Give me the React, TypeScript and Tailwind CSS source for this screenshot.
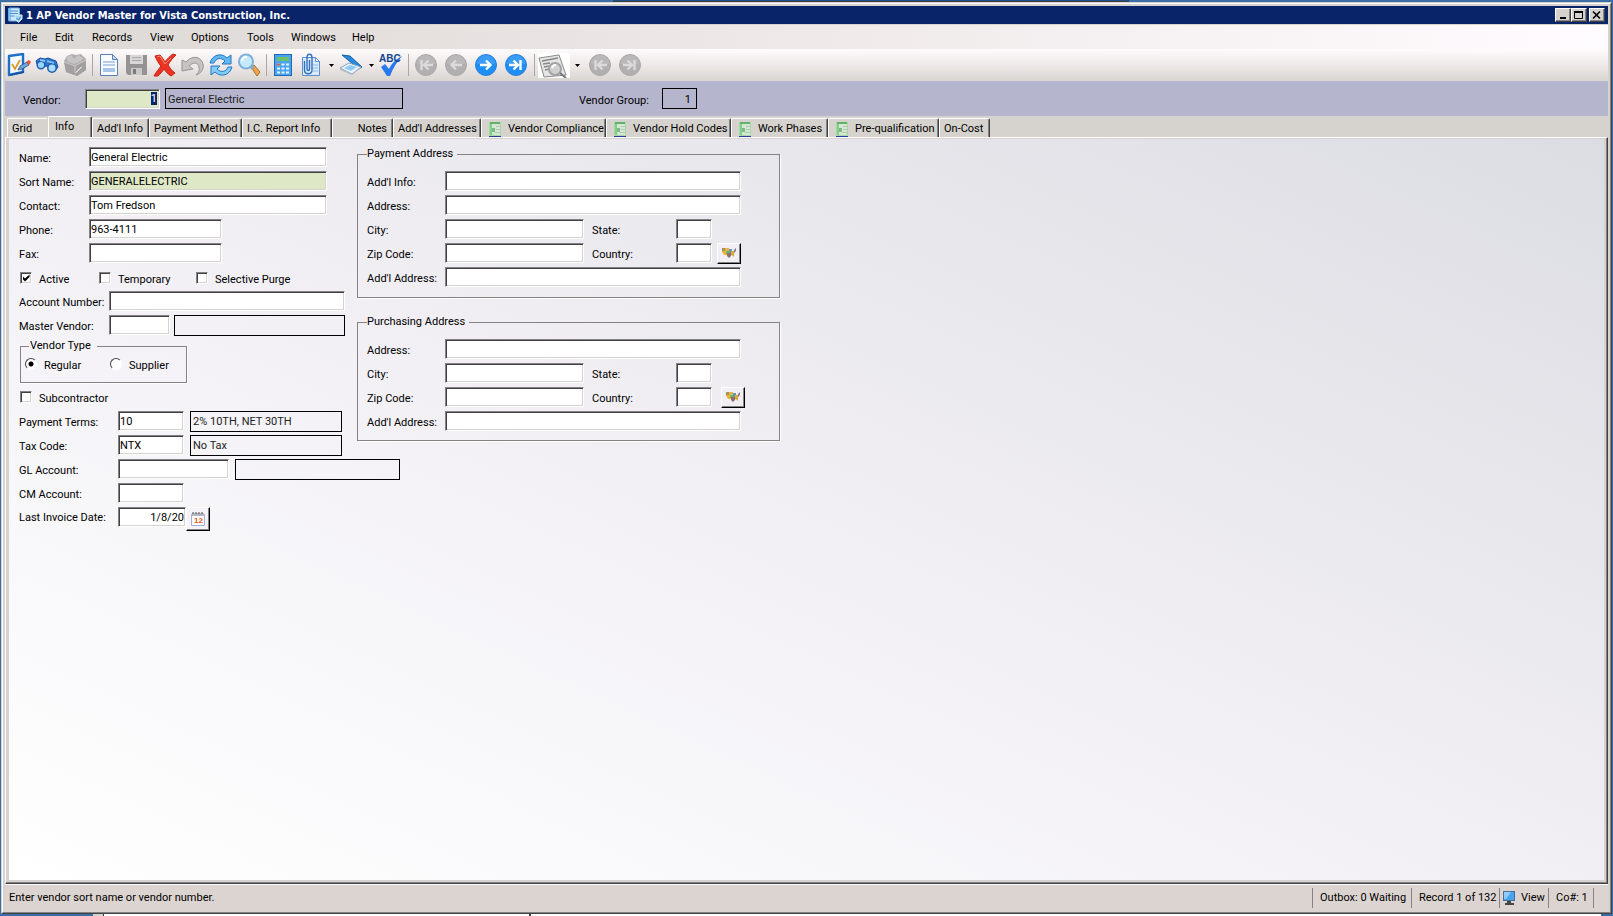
import React, { useEffect, useRef } from 'react';
import clsx from 'clsx';

const sunken =
  'border border-t-[#848284] border-l-[#848284] border-r-white border-b-white shadow-[inset_1px_1px_0_#424142,inset_-1px_-1px_0_#d6d3ce]';
const raised =
  'bg-[#d6d3ce] border border-t-white border-l-white border-r-[#424142] border-b-[#424142] shadow-[inset_-1px_-1px_0_#848284]';

interface FieldProps {
  id: string;
  label: string;
  labelClass: string;
  inputClass: string;
  value?: string;
}

const TextInput: React.FC<{ id: string; className: string; value?: string }> = ({
  id,
  className,
  value = '',
}) => (
  <input
    id={id}
    type="text"
    defaultValue={value}
    className={clsx('h-5 shrink-0 px-px outline-none', sunken, className)}
  />
);

const Label: React.FC<{ htmlFor: string; className?: string; children: React.ReactNode }> = ({
  htmlFor,
  className,
  children,
}) => (
  <label htmlFor={htmlFor} className={clsx('shrink-0 pt-1 whitespace-nowrap', className)}>
    {children}
  </label>
);

const Field: React.FC<FieldProps> = ({ id, label, labelClass, inputClass, value }) => (
  <>
    <Label htmlFor={id} className={labelClass}>
      {label}
    </Label>
    <TextInput id={id} className={inputClass} value={value} />
  </>
);

const Display: React.FC<{ htmlFor: string; className: string; children?: React.ReactNode }> = ({
  htmlFor,
  className,
  children,
}) => (
  <output
    htmlFor={htmlFor}
    className={clsx('flex h-[21px] shrink-0 items-center border border-black px-0.5 pt-0.5 text-[#222]', className)}
  >
    {children}
  </output>
);

const Row: React.FC<{ children: React.ReactNode }> = ({ children }) => (
  <div className="flex h-5 items-center">{children}</div>
);

const CheckBox: React.FC<{ id: string; label: string; className?: string; checked?: boolean }> = ({
  id,
  label,
  className,
  checked,
}) => (
  <label htmlFor={id} className={clsx('flex shrink-0 items-center gap-[7px]', className)}>
    <span className="grid size-3">
      <input
        id={id}
        type="checkbox"
        defaultChecked={checked}
        className={clsx('peer col-start-1 row-start-1 size-3 appearance-none bg-white', sunken)}
      />
      <svg
        viewBox="0 0 12 12"
        className="pointer-events-none invisible col-start-1 row-start-1 size-3 peer-checked:visible"
      >
        <path d="M3 4.5v3L5 9.500l4.500-4.500V2.500L5 6.500z" fill="#000" />
      </svg>
    </span>
    <span className="pt-1">{label}</span>
  </label>
);

const Radio: React.FC<{ id: string; label: string; checked?: boolean; className?: string }> = ({
  id,
  label,
  checked,
  className,
}) => (
  <label htmlFor={id} className={clsx('flex items-center gap-[7px]', className)}>
    <input
      id={id}
      name="vendor-type"
      type="radio"
      defaultChecked={checked}
      className="size-3 appearance-none rounded-full border border-t-[#424142] border-r-white border-b-white border-l-[#424142] bg-white checked:bg-[radial-gradient(circle,#000_2px,#fff_3px)]"
    />
    <span className="pt-1">{label}</span>
  </label>
);

const MapButton: React.FC<{ label: string; className?: string }> = ({ label, className }) => (
  <button
    type="button"
    aria-label={label}
    className={clsx(
      'grid h-[21px] w-6 shrink-0 place-items-center border border-t-white border-r-black border-b-black border-l-white bg-[#f1eff3] shadow-[inset_-1px_-1px_0_#848284]',
      className,
    )}
  >
    <svg width="16" height="12" viewBox="0 0 16 12">
      <path d="M1 1h4v4H1z" fill="#a9905c" />
      <path d="M1 4h5v4H3z" fill="#edb52f" />
      <path d="M4 1h4v4H4z" fill="#e2b84a" />
      <path d="M5 4h3v3H5z" fill="#7fb069" />
      <path d="M6 6h4v3L8 11 6 9z" fill="#8a6f6a" />
      <path d="M8 2h3v4H8z" fill="#5f97b5" />
      <path d="M10 4h4l-1 3v3l-1-1-2-1z" fill="#d9a93c" />
      <path d="M13 3l2-2v3l-2 2z" fill="#8b7a8c" />
    </svg>
  </button>
);

/* ---------- title bar ---------- */

const TitleBar: React.FC = () => (
  <header className="flex h-[18px] items-center bg-[#0a246a] pr-[3px] pl-[3px] text-white">
    <svg width="15" height="16" viewBox="0 0 15 16" className="shrink-0">
      <rect x="0.500" y="1" width="11" height="13" rx="1" fill="#cfe8fa" stroke="#6fb0e0" />
      <path d="M2 4h8M2 6.500h8M2 9h5" stroke="#3f8fd0" />
      <path d="M0 1h3v13H0z" fill="#5aa9e6" opacity="0.6" />
      <path d="M7 8h7v4l-3.500 3.500L7 12z" fill="#a9d3f0" stroke="#d5ebfa" />
      <path d="M8.500 11l2 2 2-3" stroke="#2f7fc0" fill="none" />
    </svg>
    <h1 className="grow pt-px pl-[3px] font-['DejaVu_Sans_Condensed','DejaVu_Sans',sans-serif] text-[11px] leading-[14px] font-bold">
      1 AP Vendor Master for Vista Construction, Inc.
    </h1>
    <button type="button" aria-label="Minimize" className={clsx('grid h-3.5 w-4 place-items-center', raised)}>
      <svg width="12" height="10" viewBox="0 0 12 10">
        <path d="M3 7h6v2H3z" />
      </svg>
    </button>
    <button type="button" aria-label="Maximize" className={clsx('grid h-3.5 w-4 place-items-center', raised)}>
      <svg width="12" height="10" viewBox="0 0 12 10">
        <path d="M1.500 1.500h8v7h-8z" fill="none" stroke="#000" />
        <path d="M1 1h9v2H1z" />
      </svg>
    </button>
    <button type="button" aria-label="Close" className={clsx('ml-0.5 grid h-3.5 w-4 place-items-center', raised)}>
      <svg width="12" height="10" viewBox="0 0 12 10">
        <path d="M2 1.500l7 7M9 1.500l-7 7" stroke="#000" strokeWidth="1.600" />
      </svg>
    </button>
  </header>
);

const menus = [
  { label: 'File', width: 'w-[35px]' },
  { label: 'Edit', width: 'w-[37px]' },
  { label: 'Records', width: 'w-[58px]' },
  { label: 'View', width: 'w-[41px]' },
  { label: 'Options', width: 'w-14' },
  { label: 'Tools', width: 'w-11' },
  { label: 'Windows', width: 'w-[61px]' },
  { label: 'Help', width: 'w-10' },
];

const MenuBar: React.FC = () => (
  <nav className="flex h-[25px] items-center border-t border-[#d6d3ce] bg-linear-to-r from-[#dcd8d4] via-[#efe9e9] to-[#fffcff] pt-0.5 pl-[15px]">
    {menus.map((menu) => (
      <button key={menu.label} type="button" className={clsx('shrink-0 text-left', menu.width)}>
        {menu.label}
      </button>
    ))}
  </nav>
);

/* ---------- toolbar ---------- */

const CheckFormIcon = () => (
  <svg width="24" height="24" viewBox="0 0 24 24">
    <path d="M2 3l14-2v18L2 22z" fill="#f4faff" stroke="#1d6fc8" strokeWidth="2.400" strokeLinejoin="round" />
    <path d="M3 22l14-3" stroke="#174f9c" strokeWidth="1.500" />
    <path d="M5 11l3 5 5-9" fill="none" stroke="#d99a22" strokeWidth="1.800" />
    <path d="M13 13l7-4 2 3-7 4-4 1z" fill="#6aa7dd" stroke="#2d4f7c" strokeWidth="0.800" />
    <path d="M19 9l3-2 2 2-2 3z" fill="#e2552f" />
  </svg>
);

const BinocularsIcon = () => (
  <svg width="24" height="24" viewBox="0 0 24 24">
    <path d="M1 8l4-3 5 1 3-1 8 3 2 6-3 4-5-1-2-4-7 1-4-3z" fill="#2b78cf" stroke="#174f9c" />
    <circle cx="6" cy="12" r="3.800" fill="#9bd4fb" stroke="#1d5fb0" strokeWidth="1.500" />
    <circle cx="17" cy="15" r="4.200" fill="#a9dcfd" stroke="#1d5fb0" strokeWidth="1.500" />
    <path d="M5 7l5 1M12 8l7 2" stroke="#8ec6f4" strokeWidth="1.800" />
  </svg>
);

const ToolboxIcon = () => (
  <svg width="24" height="24" viewBox="0 0 24 24">
    <path d="M1 8l3-5 5-2 4 1 5-1 5 5v11l-9 6-11-4z" fill="#b0aeae" />
    <path d="M1 9l11 4 11-6v10l-9 6-11-4z" fill="#a19f9f" />
    <path d="M4 4l4-2 3 4 4-4 5 3-2 3-7 3-7-3z" fill="#c6c4c4" />
    <path d="M12 13v10M1 9l11 4 11-6" stroke="#c9c7c7" fill="none" />
    <path d="M11 20l7-7 2 1-6 6-3 1z" fill="#d5d3d3" stroke="#8c8a8a" strokeWidth="0.600" />
  </svg>
);

const DocumentIcon = () => (
  <svg width="24" height="24" viewBox="0 0 24 24">
    <path d="M3.500 1.500h12l5 5v16h-17z" fill="#f7fbff" stroke="#5b7fb8" />
    <path d="M15.500 1.500v5h5z" fill="#c7dbf2" stroke="#5b7fb8" />
    <path d="M6 9h12M6 12h12" stroke="#b8cdeb" strokeWidth="2" />
    <path d="M6 15h12v4H6z" fill="#a9c4ea" />
  </svg>
);

const SaveIcon = () => (
  <svg width="24" height="24" viewBox="0 0 24 24">
    <path d="M1 2h21v20H3l-2-2z" fill="#949292" />
    <path d="M5 2h13v9H5z" fill="#d8d6d6" />
    <path d="M7 4.500h9M7 7.500h9" stroke="#a9a7a7" />
    <path d="M6 15h11v7H6z" fill="#c9c7c7" />
    <path d="M8 16h3v5H8z" fill="#7c7a7a" />
  </svg>
);

const DeleteIcon = () => (
  <svg width="24" height="24" viewBox="0 0 24 24">
    <path
      d="M2 3l5-1c2 2 4 5 5 7 2-3 5-6 8-8l3 1c-3 3-6 6-8 10 2 3 4 6 7 8l-4 3c-3-2-5-4-7-7-2 3-4 5-6 7H1c2-4 5-7 7-10-3-3-4-6-6-10z"
      fill="#ee3322"
      stroke="#c22315"
    />
    <path d="M4 4l3-1 5 8 6-6" stroke="#ff8f7a" fill="none" />
  </svg>
);

const UndoIcon = () => (
  <svg width="24" height="24" viewBox="0 0 24 24">
    <path d="M1 7v11l11-2-4-3c4-4 9-4 10 1 1 4-1 6-3 8 6-2 8-7 7-11C20 3 11 2 5 9z" fill="#c5c3c3" stroke="#969494" />
  </svg>
);

const RefreshIcon = () => (
  <svg width="24" height="24" viewBox="0 0 24 24">
    <path d="M1 10C3 2 12-1 18 5l4-3v9h-9l3-3C12 4 7 5 5 10z" fill="#62b8f2" stroke="#2376c4" />
    <path d="M23 14c-2 8-11 11-17 5l-4 3v-9h9l-3 3c4 4 9 3 11-2z" fill="#83cbf7" stroke="#2376c4" />
  </svg>
);

const MagnifierIcon = () => (
  <svg width="24" height="24" viewBox="0 0 24 24">
    <path d="M14 14l3-2 6 7-3 4z" fill="#f0a348" stroke="#a9702d" />
    <path d="M12 14l3-2 3 2-3 3z" fill="#9aa3ad" />
    <circle cx="9" cy="8.500" r="7" fill="#c3ebfd" stroke="#7fb0d8" strokeWidth="2" />
    <path d="M5 8a4 4 0 0 1 5-4" stroke="#fff" strokeWidth="2" fill="none" />
  </svg>
);

const CalculatorIcon = () => (
  <svg width="24" height="24" viewBox="0 0 24 24">
    <rect x="3.500" y="1.500" width="17" height="21" fill="#4aa5ee" stroke="#2068b4" />
    <path d="M6 4h12v4H6z" fill="#6cbf6b" />
    <path d="M6 11.500h12M6 15.500h12M6 19.500h12" stroke="#e6f4ff" strokeWidth="2" strokeDasharray="3 1.500" />
    <path d="M6 10.500h3v2H6z" fill="#e85a3a" />
  </svg>
);

const AttachIcon = () => (
  <svg width="24" height="24" viewBox="0 0 24 24">
    <path d="M3.500 4.500h13l4 4v14h-17z" fill="#dcebfb" stroke="#5b8fd0" />
    <path d="M16.500 4.500v4h4z" fill="#fff" stroke="#5b8fd0" />
    <path d="M14 12h5M14 15h5M14 18h5" stroke="#8fb6e4" />
    <path d="M5.500 8v9c0 5 7.500 5 7.500 0V5c0-5-5-5-5 0v11c0 2 2.500 2 2.500 0V7" fill="none" stroke="#3272bd" strokeWidth="1.400" />
  </svg>
);

const ScannerIcon = () => (
  <svg width="24" height="24" viewBox="0 0 24 24">
    <path d="M3 2l8 1 12 11-3 2z" fill="#2a8adc" stroke="#145fa8" />
    <path d="M1 15l9-5 12 4-9 7z" fill="#e9f4fd" stroke="#8aa6c2" />
    <path d="M5 15l6-3 7 2-6 4z" fill="#8fcaf3" />
    <path d="M1 15v2l12 5 9-7v-1l-9 7z" fill="#b4bcc6" />
  </svg>
);

const SpellIcon = () => (
  <svg width="26" height="24" viewBox="0 0 26 24">
    <path d="M3 14l4-3 4 5c3-6 7-10 13-13-5 6-9 12-12 20H9z" fill="#2878ee" />
    <text x="1" y="9" fontSize="10" fontWeight="bold" fill="#14448f" fontFamily="Liberation Sans, sans-serif">
      ABC
    </text>
  </svg>
);

const PreviewIcon = () => (
  <svg width="32" height="25" viewBox="0 0 32 25" className="bg-white">
    <path d="M1 5l20-3 7 20-22 2z" fill="#e5e5e5" stroke="#8a8a8a" />
    <path d="M4 8l16-3M5 11l7-1M6 14l5-1M7 17l4-1" stroke="#888" strokeWidth="1.500" />
    <circle cx="17" cy="16" r="6" fill="#d0d0d0" stroke="#a2a2a2" strokeWidth="2" />
    <path d="M14 15a4 4 0 0 1 4-3" stroke="#fff" strokeWidth="2" fill="none" />
    <path d="M22 20l6 5" stroke="#777" strokeWidth="2" />
  </svg>
);

type NavKind = 'first' | 'prev' | 'next' | 'last';

const navPaths: Record<NavKind, string> = {
  first: 'M6.500 6v10M18 11H9.500M13.500 6.500L9 11l4.500 4.500',
  prev: 'M17 11H7M11 6.500L6.500 11l4.500 4.500',
  next: 'M5 11h10M11 6.500l4.500 4.500-4.500 4.500',
  last: 'M15.500 6v10M4 11h8.500M8.500 6.500L13 11l-4.500 4.500',
};

const NavIcon: React.FC<{ kind: NavKind; active?: boolean }> = ({ kind, active }) => (
  <svg width="22" height="22" viewBox="0 0 22 22">
    <circle cx="11" cy="11" r="10.500" fill={active ? '#1e8ff5' : '#b1afaf'} stroke={active ? '#2a7fd8' : '#a9a7a7'} />
    <path d="M2 10a9 9 0 0 1 18 0z" fill="#fff" opacity="0.12" />
    <path d={navPaths[kind]} fill="none" stroke={active ? '#fff' : '#dcdada'} strokeWidth="2.400" />
  </svg>
);

const Tool: React.FC<{ label: string; className?: string; children: React.ReactNode }> = ({
  label,
  className,
  children,
}) => (
  <button type="button" aria-label={label} className={clsx('grid h-7 shrink-0 place-items-center', className ?? 'w-7')}>
    {children}
  </button>
);

const Caret: React.FC<{ label: string; className?: string }> = ({ label, className }) => (
  <button type="button" aria-label={label} className={clsx('grid h-7 w-3 shrink-0 place-items-center', className)}>
    <svg width="5" height="3" viewBox="0 0 5 3">
      <path d="M0 0h5L2.500 3z" />
    </svg>
  </button>
);

const Separator = () => <span className="mr-0.5 ml-[3px] h-[22px] w-px shrink-0 bg-[#a9a6a6]" />;

const Toolbar: React.FC = () => (
  <div
    role="toolbar"
    className="flex h-8 items-center bg-linear-to-b from-[#fdfbfc] via-[#efe9e9] to-[#d9d5d0]"
  >
    <Tool label="Close form"><CheckFormIcon /></Tool>
    <Tool label="Find"><BinocularsIcon /></Tool>
    <Tool label="Toolbox"><ToolboxIcon /></Tool>
    <Separator />
    <Tool label="New"><DocumentIcon /></Tool>
    <Tool label="Save"><SaveIcon /></Tool>
    <Tool label="Delete"><DeleteIcon /></Tool>
    <Tool label="Undo"><UndoIcon /></Tool>
    <Tool label="Refresh"><RefreshIcon /></Tool>
    <Tool label="Search"><MagnifierIcon /></Tool>
    <Separator />
    <Tool label="Calculator"><CalculatorIcon /></Tool>
    <Tool label="Attachments"><AttachIcon /></Tool>
    <Caret label="Attachment options" />
    <Tool label="Scan"><ScannerIcon /></Tool>
    <Caret label="Scan options" />
    <Tool label="Spelling"><SpellIcon /></Tool>
    <Separator />
    <Tool label="First record" className="w-[30px]"><NavIcon kind="first" /></Tool>
    <Tool label="Previous record" className="w-[30px]"><NavIcon kind="prev" /></Tool>
    <Tool label="Next record" className="w-[30px]"><NavIcon kind="next" active /></Tool>
    <Tool label="Last record" className="w-[30px]"><NavIcon kind="last" active /></Tool>
    <Separator />
    <Tool label="Preview" className="w-[34px]"><PreviewIcon /></Tool>
    <Caret label="Preview options" className="mr-0.5" />
    <Tool label="First page" className="w-[30px]"><NavIcon kind="first" /></Tool>
    <Tool label="Last page" className="w-[30px]"><NavIcon kind="last" /></Tool>
  </div>
);

/* ---------- record header ---------- */

const RecordHeader: React.FC = () => {
  const vendorRef = useRef<HTMLInputElement>(null);

  useEffect(() => {
    vendorRef.current?.focus();
    vendorRef.current?.select();
  }, []);

  return (
    <div className="flex h-[35px] items-center bg-[#b5b5ce] pl-[18px]">
      <Label htmlFor="vendor" className="w-[62px]">
        Vendor:
      </Label>
      <input
        id="vendor"
        ref={vendorRef}
        type="text"
        defaultValue="1"
        className={clsx(
          'h-5 w-[75px] shrink-0 bg-[#dee7c6] px-0.5 text-right outline-none selection:bg-[#0a246a] selection:text-white',
          sunken,
        )}
      />
      <Display htmlFor="vendor" className="ml-[5px] w-[238px]">
        General Electric
      </Display>
      <Label htmlFor="vendor-group" className="ml-44 w-[83px]">
        Vendor Group:
      </Label>
      <output
        id="vendor-group"
        className="flex h-[21px] w-[35px] items-center justify-end border border-black pt-0.5 pr-[5px]"
      >
        1
      </output>
    </div>
  );
};

/* ---------- tabs ---------- */

interface Tab {
  label: string;
  width: string;
  icon?: boolean;
  end?: boolean;
}

const tabs: Tab[] = [
  { label: 'Grid', width: 'w-[41px]' },
  { label: 'Info', width: 'w-11' },
  { label: "Add'l Info", width: 'w-[57px]' },
  { label: 'Payment Method', width: 'w-[93px]' },
  { label: 'I.C. Report Info', width: 'w-[90px]' },
  { label: 'Notes', width: 'w-[61px]', end: true },
  { label: "Add'l Addresses", width: 'w-[88px]' },
  { label: 'Vendor Compliance', width: 'w-[125px]', icon: true },
  { label: 'Vendor Hold Codes', width: 'w-[125px]', icon: true },
  { label: 'Work Phases', width: 'w-[97px]', icon: true },
  { label: 'Pre-qualification', width: 'w-[111px]', icon: true },
  { label: 'On-Cost', width: 'w-[51px]' },
];

const SheetIcon = () => (
  <svg width="12" height="15" viewBox="0 0 12 15" className="mr-[7px] shrink-0">
    <path d="M0 0h12v15H0z" fill="#a5d8a5" />
    <path d="M3 2h8v11H3z" fill="#d5e6d5" />
    <path d="M1 1h10" stroke="#1f8a2b" />
    <path d="M1 2h2v11H1z" fill="#7fd284" />
    <path d="M3 6h3v4H3z" fill="#7fb985" />
    <path d="M7 4.500h4M7 7.500h4M6 10.500h5" stroke="#b3c9b3" />
    <path d="M0 14.500h12" stroke="#2a3f9c" />
  </svg>
);

const TabStrip: React.FC<{ active: string }> = ({ active }) => (
  <div role="tablist" className="flex h-[21px] items-end bg-[#d6d3ce] pl-0.5">
    {tabs.map((tab) => (
      <button
        key={tab.label}
        type="button"
        role="tab"
        aria-selected={tab.label === active}
        className={clsx(
          'flex shrink-0 items-center rounded-t-xs border-t border-r border-l border-t-white border-l-white whitespace-nowrap',
          tab.width,
          tab.label === active ? 'h-[21px] pl-1.5' : 'h-[19px] pt-0.5',
          tab.label !== active && (tab.icon ? 'pl-[7px]' : 'pl-1'),
          tab.end && 'justify-end pr-[5px]',
          tab.label === 'Grid' ? 'border-r-[#d6d3ce]' : 'border-r-[#424142] shadow-[inset_-1px_0_0_#848284]',
        )}
      >
        {tab.icon && <SheetIcon />}
        {tab.label}
      </button>
    ))}
  </div>
);

/* ---------- form ---------- */

const VendorForm: React.FC = () => (
  <div className="flex w-[338px] shrink-0 flex-col gap-1">
    <Row>
      <Field id="name" label="Name:" labelClass="w-[70px]" inputClass="w-[238px] bg-white" value="General Electric" />
    </Row>
    <Row>
      <Field id="sort-name" label="Sort Name:" labelClass="w-[70px]" inputClass="w-[238px] bg-[#dee7c6]" value="GENERALELECTRIC" />
    </Row>
    <Row>
      <Field id="contact" label="Contact:" labelClass="w-[70px]" inputClass="w-[238px] bg-white" value="Tom Fredson" />
    </Row>
    <Row>
      <Field id="phone" label="Phone:" labelClass="w-[70px]" inputClass="w-[133px] bg-white" value="963-4111" />
    </Row>
    <Row>
      <Field id="fax" label="Fax:" labelClass="w-[70px]" inputClass="w-[133px] bg-white" />
    </Row>
    <div className="flex h-5 items-end pl-px">
      <CheckBox id="active" label="Active" className="w-[79px]" checked />
      <CheckBox id="temporary" label="Temporary" className="w-[97px]" />
      <CheckBox id="purge" label="Selective Purge" />
    </div>
    <Row>
      <Field id="account" label="Account Number:" labelClass="w-[90px]" inputClass="w-[236px] bg-white" />
    </Row>
    <Row>
      <Field id="master" label="Master Vendor:" labelClass="w-[90px]" inputClass="w-[61px] bg-white" />
      <Display htmlFor="master" className="ml-1 w-[171px]" />
    </Row>
    <fieldset className="ml-px h-11 w-[167px] border border-[#848284] pb-px shadow-[1px_1px_0_#fff]">
      <legend className="ml-2 h-3.5 w-[68px] px-px">Vendor Type</legend>
      <div className="flex pt-0.5 pl-1">
        <Radio id="regular" label="Regular" className="w-[85px]" checked />
        <Radio id="supplier" label="Supplier" />
      </div>
    </fieldset>
    <div className="flex h-5 items-center pl-px">
      <CheckBox id="subcontractor" label="Subcontractor" />
    </div>
    <Row>
      <Field id="terms" label="Payment Terms:" labelClass="w-[99px]" inputClass="w-[66px] bg-white" value="10" />
      <Display htmlFor="terms" className="ml-1.5 w-[152px]">
        2% 10TH, NET 30TH
      </Display>
    </Row>
    <Row>
      <Field id="tax" label="Tax Code:" labelClass="w-[99px]" inputClass="w-[66px] bg-white" value="NTX" />
      <Display htmlFor="tax" className="ml-1.5 w-[152px]">
        No Tax
      </Display>
    </Row>
    <Row>
      <Field id="gl" label="GL Account:" labelClass="w-[99px]" inputClass="w-[111px] bg-white" />
      <Display htmlFor="gl" className="ml-1.5 w-[165px]" />
    </Row>
    <Row>
      <Field id="cm" label="CM Account:" labelClass="w-[99px]" inputClass="w-[66px] bg-white" />
    </Row>
    <div className="flex h-6 items-start">
      <Field id="invoice" label="Last Invoice Date:" labelClass="w-[99px]" inputClass="w-[68px] bg-white text-right" value="1/8/20" />
      <button
        type="button"
        aria-label="Pick a date"
        className="grid size-6 place-items-center border border-t-white border-r-black border-b-black border-l-white bg-[#f6f4f8] shadow-[inset_-1px_-1px_0_#848284]"
      >
        <svg width="14" height="14" viewBox="0 0 14 14">
          <path d="M0.500 2.500h13v11H0.500z" fill="#fff" stroke="#a3aee0" />
          <path d="M1 1h12v3H1z" fill="#b5b5c2" />
          <path d="M2 0v2M5 0v2M8 0v2M11 0v2" stroke="#555" />
          <text x="3" y="11" fontSize="8" fontWeight="bold" fill="#ea5514" fontFamily="Liberation Sans, sans-serif">
            12
          </text>
        </svg>
      </button>
    </div>
  </div>
);

const AddressGroup: React.FC<{ prefix: string; title: string; withInfo?: boolean; className: string }> = ({
  prefix,
  title,
  withInfo,
  className,
}) => (
  <fieldset className={clsx('border border-[#848284] pl-[9px] shadow-[1px_1px_0_#fff]', className)}>
    <legend className="h-3.5 pr-1">{title}</legend>
    <div className="flex flex-col gap-1 pt-2.5">
      {withInfo && (
        <Row>
          <Field id={`${prefix}-info`} label="Add'l Info:" labelClass="w-[78px]" inputClass="w-[296px] bg-white" />
        </Row>
      )}
      <Row>
        <Field id={`${prefix}-address`} label="Address:" labelClass="w-[78px]" inputClass="w-[296px] bg-white" />
      </Row>
      <Row>
        <Field id={`${prefix}-city`} label="City:" labelClass="w-[78px]" inputClass="w-[139px] bg-white" />
        <Field id={`${prefix}-state`} label="State:" labelClass="ml-2 w-[84px]" inputClass="w-9 bg-white" />
      </Row>
      <Row>
        <Field id={`${prefix}-zip`} label="Zip Code:" labelClass="w-[78px]" inputClass="w-[139px] bg-white" />
        <Field id={`${prefix}-country`} label="Country:" labelClass="ml-2 w-[84px]" inputClass="w-9 bg-white" />
        <MapButton label={`Map ${title}`} className={withInfo ? 'ml-[5px]' : 'ml-[9px]'} />
      </Row>
      <Row>
        <Field id={`${prefix}-address2`} label="Add'l Address:" labelClass="w-[78px]" inputClass="w-[296px] bg-white" />
      </Row>
    </div>
  </fieldset>
);

/* ---------- status bar ---------- */

const StatusBar: React.FC = () => (
  <footer className="flex h-7 items-center border-t border-white bg-[#dcd4d0] pr-3.5 pb-px pl-1">
    <p className="grow">Enter vendor sort name or vendor number.</p>
    <span className="h-5 w-[99px] border-l border-[#848284] pt-[3px] pl-[7px]">Outbox: 0 Waiting</span>
    <span className="h-5 w-[88px] border-l border-[#848284] pt-[3px] pl-[7px]">Record 1 of 132</span>
    <span className="flex h-5 w-[49px] items-center gap-1.5 border-l border-[#848284] pl-[3px]">
      <svg width="12" height="14" viewBox="0 0 12 14">
        <rect x="0.500" y="0.500" width="11" height="9" fill="#4aa3ee" stroke="#4b6f96" />
        <path d="M1 1h7L3 8H1z" fill="#8fccfa" />
        <path d="M4 10h4v2h3v2H2v-2h2z" fill="#444" />
      </svg>
      View
    </span>
    <span className="h-5 w-[46px] border-r border-l border-[#848284] pt-[3px] pl-[7px]">Co#: 1</span>
  </footer>
);

export default function App() {
  return (
    <div className="flex h-screen min-w-[1020px] flex-col bg-[#3a6ea5] font-[Roboto,'Liberation_Sans',sans-serif] text-[11px] leading-[14px] text-black">
      {/* Edge of the window behind, above the title bar */}
      <div className="h-0.5 shrink-0">
        <div className="ml-[38%] h-full w-[32%] border-b border-[#424142] bg-[#1c4f8c]" />
      </div>
      <div className="mx-px flex grow flex-col border border-t-[#d6d3ce] border-r-[#424142] border-b-[#424142] border-l-[#d6d3ce] bg-[#d6d3ce]">
        <div className="flex grow flex-col border border-t-white border-r-[#848284] border-b-[#848284] border-l-white p-0.5 pb-0">
          <TitleBar />
          <MenuBar />
          <Toolbar />
          <RecordHeader />
          <TabStrip active="Info" />
          <main className="flex grow flex-col border border-t-white border-r-[#424142] border-b-[#424142] border-l-white bg-[#d6d3ce] px-[3px] pt-px pb-[3px] shadow-[inset_-1px_-1px_0_#848284]">
            <div className="flex grow items-start bg-linear-to-tr from-white via-[#f1eff4] to-[#dcdde3] pt-2 pl-2.5">
              <VendorForm />
              <div className="flex w-[423px] shrink-0 flex-col">
                <AddressGroup prefix="payment" title="Payment Address" withInfo className="h-[151px]" />
                <AddressGroup prefix="purchasing" title="Purchasing Address" className="mt-[17px] h-[126px]" />
              </div>
            </div>
          </main>
          <StatusBar />
        </div>
      </div>
      {/* Windows behind, showing under the bottom border */}
      <div className="flex h-0.5 shrink-0">
        <div className="w-[93px]" />
        <div className="w-[11px] border-r border-[#424142] bg-[#d6d3ce]" />
        <div className="w-[427px] border-r-2 border-[#424142] bg-white" />
        <div className="grow bg-white" />
        <div className="w-3 bg-[#3a6ea5]" />
      </div>
    </div>
  );
}
